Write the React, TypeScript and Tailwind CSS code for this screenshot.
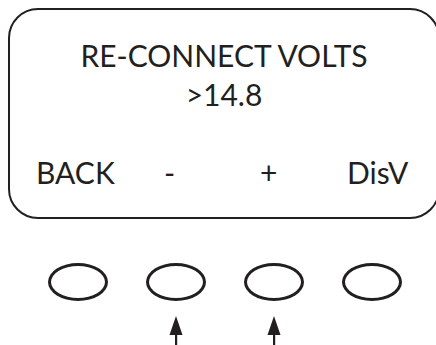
import React from "react";

const Arrow = () => (
  <svg width="16" height="30" viewBox="0 0 16 30" className="block">
    <polygon points="8,0 14.5,19 1.5,19" fill="#231f20" />
    <rect x="7" y="15" width="2.2" height="15" fill="#231f20" />
  </svg>
);

export default function App() {
  const font = { fontFamily: "Lato, 'Open Sans', sans-serif" };
  return (
    <div className="w-[436px] h-[345px] overflow-hidden bg-white relative" style={font}>
      <div className="pt-[8px] pl-[8px]">
        <div className="w-[432px] h-[211px] border-[2px] border-[#231f20] rounded-[30px] flex flex-col text-[#231f20]">
          <div className="pt-[26px] flex flex-col items-center text-[30px] leading-[39px]">
            <div>RE-CONNECT VOLTS</div>
            <div>&gt;14.8</div>
          </div>
          <div className="relative mt-[39px] h-[39px] text-[30px] leading-[39px]">
            <span className="absolute left-[26px]">BACK</span>
            <span className="absolute left-[154px]">-</span>
            <span className="absolute left-[250px]">+</span>
            <span className="absolute left-[337px]">DisV</span>
          </div>
        </div>
      </div>
      <div className="flex pl-[48px] gap-[38px] mt-[44px]">
        {[0, 1, 2, 3].map((i) => (
          <div key={i} className="w-[60px] h-[38px] rounded-[50%] border-[3px] border-[#231f20]" />
        ))}
      </div>
      <div className="flex pl-[48px] gap-[38px] mt-[15px]">
        {[0, 1, 2, 3].map((i) => (
          <div key={i} className="w-[60px] flex justify-center">
            {(i === 1 || i === 2) && <Arrow />}
          </div>
        ))}
      </div>
    </div>
  );
}
